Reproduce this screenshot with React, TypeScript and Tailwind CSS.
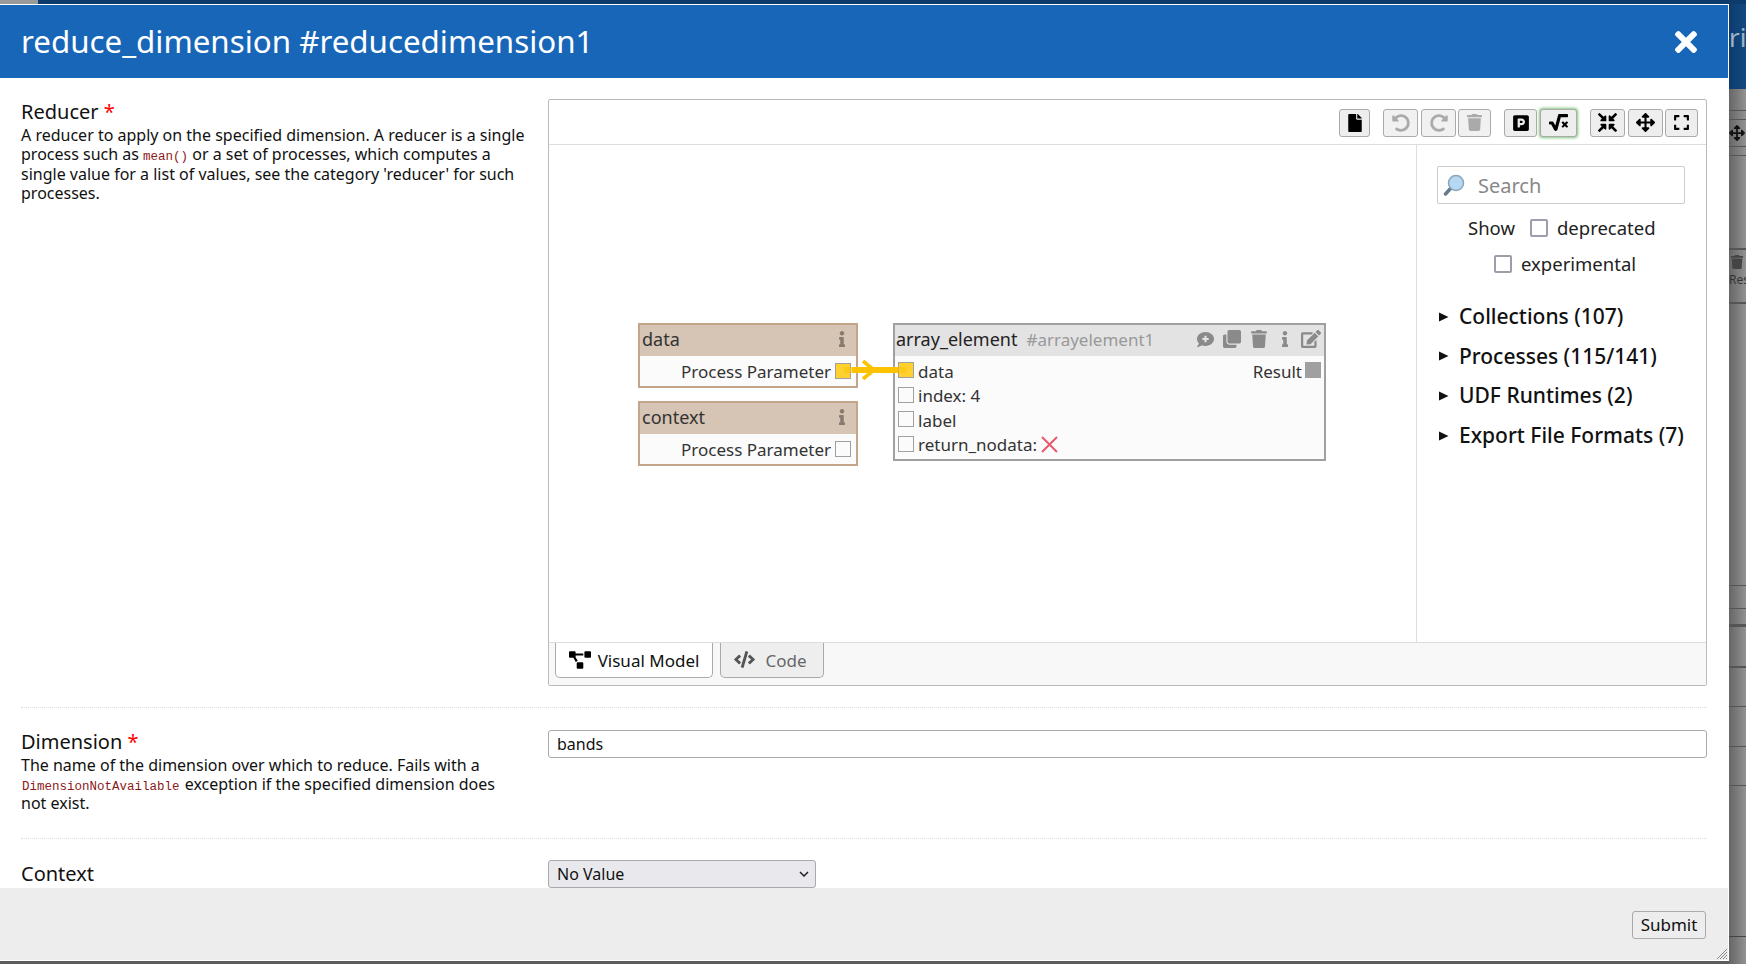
import React from "react";
import {
  FaFile, FaUndoAlt, FaRedoAlt, FaTrash, FaParking, FaSquareRootAlt, FaCompressArrowsAlt, FaArrowsAlt,
  FaExpand, FaCommentMedical, FaClone, FaInfo, FaEdit, FaCode, FaProjectDiagram, FaTimes,
} from "react-icons/fa";

const font = "font-['Noto_Sans','Open_Sans',sans-serif]";

function Btn({ children, w, disabled, active }: { children: React.ReactNode; w: string; disabled?: boolean; active?: boolean }) {
  return (
    <div className={`${w} h-[28px] flex items-center justify-center rounded-[3px] border border-[#aaa] ${disabled ? "text-[#aaa] bg-[#f1f1f1]" : "text-black bg-[#eee]"} ${active ? "shadow-[0_0_3px_1px_#7cc47c]" : ""}`}>
      {children}
    </div>
  );
}

function Socket({ on, filled }: { on?: boolean; filled?: boolean }) {
  return <span className={`inline-block w-[16px] h-[16px] shrink-0 border border-[#a0a0a0] -translate-y-[1px] ${on ? "bg-[#ffd02e]" : filled ? "bg-[#a0a0a0]" : "bg-[#fbfbfb]"}`} />;
}

function ParamBlock({ name }: { name: string }) {
  return (
    <div className="w-[220px] h-[65px] border-2 border-[#c2a58a] bg-[#fbfbfb] text-[#333]">
      <div className="h-[31px] bg-[#d6c4b4] flex items-center justify-between pl-[2px] pr-[6px] pb-[3px] text-[18px] leading-none">
        <span>{name}</span>
        <FaInfo size={16} className="text-[#877a6f]" />
      </div>
      <div className="flex items-center justify-end h-[30px] pt-[1px] pr-[5px] gap-[4px] text-[17px]">
        <span>Process Parameter</span>
        <Socket on={name === "data"} />
      </div>
    </div>
  );
}

function Row({ children, on }: { children: React.ReactNode; on?: boolean }) {
  return (
    <div className="h-[24.5px] flex items-center gap-[4px] pl-[3px] text-[17px] text-[#333] whitespace-nowrap">
      <Socket on={on} />
      {children}
    </div>
  );
}

function Tree({ label }: { label: string }) {
  return (
    <div className="flex items-center h-[39.6px] text-[21px] font-medium text-[#111]">
      <svg width="10" height="10" viewBox="0 0 10 10" className="ml-[2px] mr-[10px] shrink-0"><path d="M0 0.5L9.5 5 0 9.5z" fill="#111" /></svg>
      <span className="leading-none whitespace-nowrap">{label}</span>
    </div>
  );
}

const Line = () => <div className="h-[1px] bg-[#555]" />;

export default function App() {
  return (
    <div className={`${font} relative w-[1746px] h-[964px] overflow-hidden bg-[#5c5c5c]`}>
      {/* dimmed page behind the dialog */}
      <div className="flex flex-col h-full">
        <div className="flex h-[4px] shrink-0 bg-[#0d3c6c]"><div className="w-[38px] bg-[#9a9a9a]" /></div>
        <div className="flex-1 flex justify-end">
          <div className="w-[17px] h-full flex flex-col bg-gradient-to-r from-[#666] to-[#929292] overflow-hidden">
            <div className="h-[85px] shrink-0 bg-gradient-to-r from-[#0c3b6e] to-[#124a80] text-[#9fb2c4] text-[26px] leading-none pt-[20px] whitespace-nowrap">ria</div>
            <div className="h-[21px] shrink-0" />
            <Line />
            <div className="h-[8px] shrink-0" />
            <Line />
            <div className="h-[26px] shrink-0 flex items-center text-[#111]"><FaArrowsAlt size={16} /></div>
            <Line />
            <div className="h-[8px] shrink-0" />
            <Line />
            <div className="h-[92px] shrink-0" />
            <div className="h-[2px] bg-[#555]" />
            <div className="h-[23px] shrink-0 flex items-center pl-[1px] text-[#444]"><FaTrash size={14} /></div>
            <div className="text-[12px] leading-[14px] text-[#333] h-[29px] whitespace-nowrap">Result</div>
            <div className="h-[2px] bg-[#555]" />
            <div className="h-[281px] shrink-0" />
            <Line />
            <div className="h-[22px] shrink-0" />
            <Line />
            <div className="h-[15px] shrink-0" />
            <div className="h-[3px] bg-[#555]" />
            <div className="h-[39px] shrink-0" />
            <div className="h-[2px] bg-[#555]" />
            <div className="h-[38px] shrink-0" />
            <Line />
            <div className="h-[39px] shrink-0" />
            <Line />
            <div className="h-[38px] shrink-0" />
            <Line />
            <div className="h-[150px] shrink-0" />
            <div className="h-[1px] bg-[#444]" />
          </div>
        </div>
      </div>

      {/* dialog */}
      <div className="absolute left-0 top-[4px] w-[1729px] h-[957px] bg-white border-t border-r border-b border-white flex flex-col text-[#111]">
        <div className="h-[73px] shrink-0 bg-[#1766b8] flex items-center justify-between pl-[21px] pr-[26px] text-white">
          <span className="text-[31.3px] leading-none">reduce_dimension #reducedimension1</span>
          <FaTimes size={32} />
        </div>

        <div className="flex-1 min-h-0 overflow-hidden px-[21px] pt-[21px]">
          {/* Reducer */}
          <div className="flex gap-[20px] pb-[21px] border-b border-dotted border-[#ddd]">
            <div className="w-[507px] shrink-0 pt-[2px]">
              <div className="text-[20px] leading-[22px]">Reducer <span className="text-[#f00]">*</span></div>
              <p className="text-[16px] leading-[19.3px] text-[#111] pt-[3px]">
                A reducer to apply on the specified dimension. A reducer is a single process such as <code className="font-['Liberation_Mono',monospace] text-[12.5px] leading-none text-[#8b1a1a]">mean()</code> or a set of processes, which computes a single value for a list of values, see the category 'reducer' for such processes.
              </p>
            </div>
            <div className="flex-1 h-[587px] border border-[#bbb] rounded-[2px] flex flex-col">
              <div className="h-[45px] shrink-0 flex items-center justify-end border-b border-[#ddd] pr-[8px] pt-[1px]">
                <Btn w="w-[31px]"><FaFile size={18} /></Btn>
                <div className="w-[13px]" />
                <Btn w="w-[35px]" disabled><FaUndoAlt size={18} /></Btn>
                <div className="w-[3px]" />
                <Btn w="w-[35px]" disabled><FaRedoAlt size={18} /></Btn>
                <div className="w-[2px]" />
                <Btn w="w-[33px]" disabled><FaTrash size={17} /></Btn>
                <div className="w-[13px]" />
                <Btn w="w-[33px]"><FaParking size={18} /></Btn>
                <div className="w-[3px]" />
                <Btn w="w-[37px]" active><FaSquareRootAlt size={19} /></Btn>
                <div className="w-[13px]" />
                <Btn w="w-[35px]"><FaCompressArrowsAlt size={19} /></Btn>
                <div className="w-[3px]" />
                <Btn w="w-[35px]"><FaArrowsAlt size={19} /></Btn>
                <div className="w-[2px]" />
                <Btn w="w-[33px]"><FaExpand size={17} /></Btn>
              </div>

              <div className="flex-1 min-h-0 flex">
                <div className="flex-1 relative">
                  {/* free canvas: nodes of the diagram */}
                  <div className="absolute left-[89px] top-[178px]"><ParamBlock name="data" /></div>
                  <div className="absolute left-[89px] top-[256px]"><ParamBlock name="context" /></div>
                  <div className="absolute left-[344px] top-[178px] w-[433px] h-[138px] border-2 border-[#a0a0a0] bg-[#fbfbfb]">
                    <div className="h-[31px] bg-[#e3e3e3] flex items-center pl-[1px] pb-[3px] leading-none whitespace-nowrap text-[#222]">
                      <span className="text-[18px]">array_element</span>
                      <span className="ml-[9px] text-[#999] text-[17px]">#arrayelement1</span>
                      <span className="ml-auto flex items-center pr-[3px] text-[#8a8a8a]">
                        <FaCommentMedical size={17} />
                        <FaClone size={18} className="ml-[9px]" />
                        <FaTrash size={18} className="ml-[9px]" />
                        <FaInfo size={16} className="ml-[8.5px]" />
                        <FaEdit size={20} className="ml-[8.5px]" />
                      </span>
                    </div>
                    <div className="relative pt-[3px]">
                      <Row on><span>data</span></Row>
                      <Row><span>index: 4</span></Row>
                      <Row><span>label</span></Row>
                      <Row><span>return_nodata:</span>
                        <svg width="17" height="17" viewBox="0 0 17 17" stroke="#e85a6b" strokeWidth="2"><path d="M1 1l15 15M16 1L1 16" /></svg>
                      </Row>
                      <div className="absolute right-[3px] top-[3px] h-[24.5px] flex items-center gap-[3px] text-[17px] text-[#333]">
                        <span>Result</span>
                        <Socket filled />
                      </div>
                    </div>
                  </div>
                  <svg className="absolute left-[295px] top-[215px]" width="64" height="20" viewBox="0 0 64 20">
                    <path d="M0 10H8M54 10H62" stroke="#fdc300" strokeOpacity="0.5" strokeWidth="6" fill="none" />
                    <path d="M8 10H54" stroke="#fdc300" strokeWidth="6" fill="none" />
                    <path d="M19 1L30 10 19 19" stroke="#fdc300" strokeWidth="3.600" fill="none" />
                  </svg>
                </div>

                <div className="w-[290px] shrink-0 border-l border-[#ddd] pl-[20px] pr-[21px] pt-[21px]">
                  <div className="h-[38px] border border-[#ccc] rounded-[2px] flex items-center pl-[5px] gap-[13px]">
                    <svg width="22" height="22" viewBox="0 0 22 22" className="shrink-0">
                      <path d="M2.500 20L8 14" stroke="#64798c" strokeWidth="3.400" strokeLinecap="round" />
                      <circle cx="13" cy="9" r="7.500" fill="#b5d9f5" stroke="#8aa4ba" strokeWidth="1.500" />
                    </svg>
                    <span className="text-[20px] text-[#888] leading-none pt-[2px]">Search</span>
                  </div>
                  <div className="flex items-center h-[37px] mt-[5px] pl-[31px] text-[18.5px] text-[#222]">
                    <span className="mr-[15px]">Show</span>
                    <span className="w-[18px] h-[18px] mr-[9px] rounded-[2px] border-2 border-[#9d9dab] bg-white" />
                    <span>deprecated</span>
                  </div>
                  <div className="flex items-center h-[36px] pl-[57px] text-[18.5px] text-[#222]">
                    <span className="w-[18px] h-[18px] mr-[9px] rounded-[2px] border-2 border-[#9d9dab] bg-white" />
                    <span>experimental</span>
                  </div>
                  <div className="mt-[15px]">
                    <Tree label="Collections (107)" />
                    <Tree label="Processes (115/141)" />
                    <Tree label="UDF Runtimes (2)" />
                    <Tree label="Export File Formats (7)" />
                  </div>
                </div>
              </div>

              <div className="h-[43px] shrink-0 bg-[#f8f8f8] border-t border-[#ddd] flex items-start pl-[6px] gap-[7px] -mt-[1px]">
                <div className="w-[158px] h-[35px] pt-[1px] bg-white border border-t-0 border-[#aaa] rounded-b-[5px] flex items-center justify-center gap-[7px] text-[17px] text-[#111]">
                  <FaProjectDiagram size={22} className="text-black -translate-y-[1px]" />
                  <span>Visual Model</span>
                </div>
                <div className="w-[104px] h-[35px] pt-[1px] pr-[3px] bg-[#eee] border border-t-0 border-[#aaa] rounded-b-[5px] flex items-center justify-center gap-[10px] text-[17px] text-[#666]">
                  <FaCode size={21} className="text-[#555] -translate-y-[1px]" />
                  <span>Code</span>
                </div>
              </div>
            </div>
          </div>

          {/* Dimension */}
          <div className="flex gap-[20px] pt-[21px] pb-[25px] border-b border-dotted border-[#ddd]">
            <div className="w-[507px] shrink-0 pt-[2px]">
              <div className="text-[20px] leading-[22px]">Dimension <span className="text-[#f00]">*</span></div>
              <p className="text-[16px] leading-[19px] pt-[3px]">
                The name of the dimension over which to reduce. Fails with a <code className="font-['Liberation_Mono',monospace] text-[12.5px] leading-none text-[#8b1a1a] mx-[1px]">DimensionNotAvailable</code> exception if the specified dimension does<br />not exist.
              </p>
            </div>
            <div className="flex-1 pt-[1px]">
              <div className="h-[28px] border border-[#aaa] rounded-[3px] flex items-center px-[8px] text-[16px]">bands</div>
            </div>
          </div>

          {/* Context */}
          <div className="flex gap-[20px] pt-[21px]">
            <div className="w-[507px] shrink-0 text-[20px] leading-[28px]">Context</div>
            <div className="flex-1">
              <div className="w-[268px] h-[28px] border border-[#aaa] rounded-[3px] bg-[#e9e9ed] flex items-center justify-between pl-[8px] pr-[6px] text-[16px]">
                <span>No Value</span>
                <svg width="10" height="6" viewBox="0 0 10 6" fill="none" stroke="#222" strokeWidth="1.500"><path d="M1 1l4 4 4-4" /></svg>
              </div>
            </div>
          </div>
        </div>

        <div className="relative h-[72px] shrink-0 bg-[#ededed] flex items-center justify-end pr-[22px] pt-[1px]">
          <div className="w-[74px] h-[28px] border border-[#aaa] rounded-[3px] flex items-center justify-center text-[17px] text-[#111]">Submit</div>
          <svg className="absolute right-0 bottom-0" width="12" height="12" viewBox="0 0 12 12" stroke="#888" strokeWidth="1"><path d="M1 11L11 1M4 11l7-7M7 11l4-4M10 11l1-1" /></svg>
        </div>
      </div>
    </div>
  );
}
